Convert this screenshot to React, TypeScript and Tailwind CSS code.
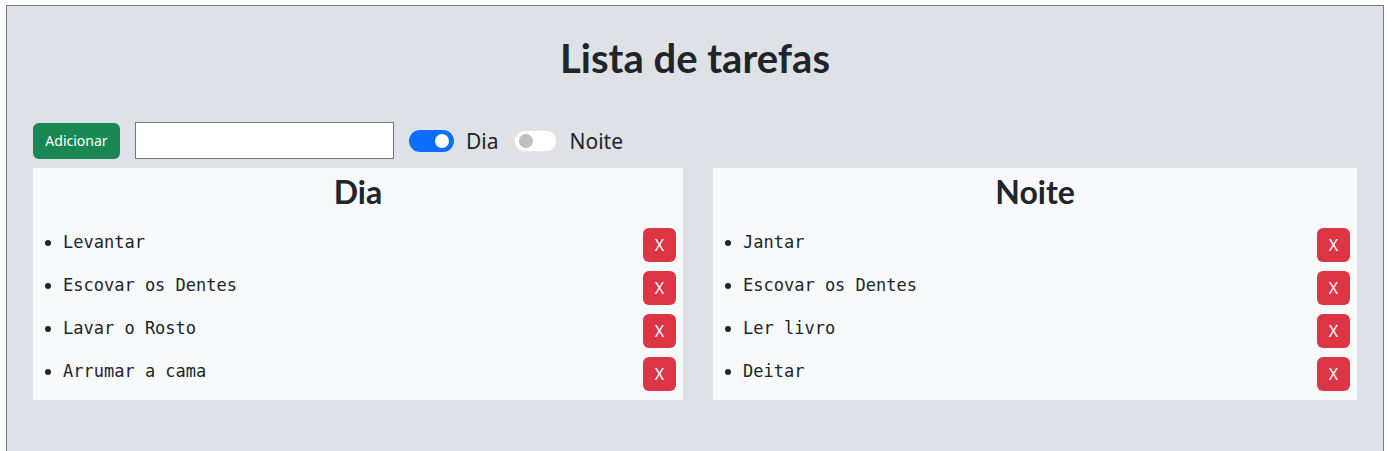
import React from "react";

const dia = ["Levantar", "Escovar os Dentes", "Lavar o Rosto", "Arrumar a cama"];
const noite = ["Jantar", "Escovar os Dentes", "Ler livro", "Deitar"];

function Panel({ title, items, width }: { title: string; items: string[]; width: string }) {
  return (
    <div className={`${width} bg-[#f8f9fa] pt-[5px] pb-[9px]`}>
      <h2 className="text-center font-['Lato',sans-serif] text-[32px] leading-[38px] font-bold text-[#212529] mb-[17px]">{title}</h2>
      <ul className="list-disc pl-[30px] pr-[7px] flex flex-col gap-[9px]">
        {items.map((t, i) => (
          <li key={i} className="text-[#212529]">
            <div className="flex items-start justify-between">
              <span className="font-['DejaVu_Sans_Mono',monospace] text-[17px] leading-[24px] pt-[2px]">{t}</span>
              <button className="h-[34px] w-[33px] rounded-[6px] bg-[#dc3545] text-white text-[16px] font-['Noto_Sans',sans-serif] flex items-center justify-center">
                X
              </button>
            </div>
          </li>
        ))}
      </ul>
    </div>
  );
}

export default function App() {
  return (
    <div className="font-['Noto_Sans',sans-serif] text-[#212529]">
      <div className="mt-[5px] ml-[6px] w-[1378px] min-h-[460px] border border-[#7a7a7a] bg-[#dee2e6] px-[26px] pt-[28px]">
        <h1 className="text-center font-['Lato',sans-serif] text-[40px] leading-[48px] font-bold mb-[40px]">Lista de tarefas</h1>
        <div className="flex items-center h-[37px] mb-[9px]">
          <button className="h-[36px] w-[87px] rounded-[6px] bg-[#198754] text-white text-[14px] flex items-center justify-center">
            Adicionar
          </button>
          <input className="ml-[15px] h-[37px] w-[259px] border border-[#767676] bg-white" />
          <div className="ml-[15px] relative h-[22px] w-[45px] rounded-full bg-[#0d6efd]">
            <div className="absolute right-[5px] top-[4px] h-[14px] w-[14px] rounded-full bg-white" />
          </div>
          <span className="ml-[12px] text-[21px] leading-[24px]">Dia</span>
          <div className="ml-[15px] relative h-[22px] w-[43px] rounded-full bg-white border border-[#e6e6e6]">
            <div className="absolute left-[4px] top-[3px] h-[14px] w-[14px] rounded-full bg-[#bfbfbf]" />
          </div>
          <span className="ml-[13px] text-[21px] leading-[24px]">Noite</span>
        </div>
        <div className="flex gap-[30px]">
          <Panel title="Dia" items={dia} width="w-[650px]" />
          <Panel title="Noite" items={noite} width="w-[644px]" />
        </div>
      </div>
    </div>
  );
}
